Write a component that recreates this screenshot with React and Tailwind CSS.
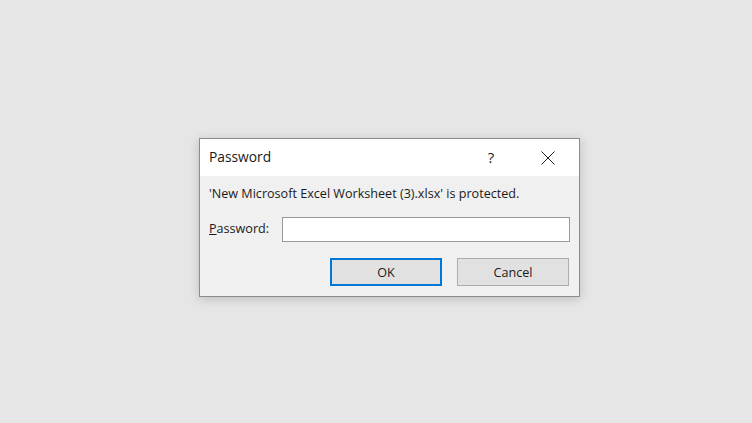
export default function App() {
  return (
    <div className="min-h-[423px] w-full bg-[#e6e6e6] pl-[199px] pt-[138px] font-['Open_Sans','Noto_Sans',sans-serif] text-[#000]">
      <div className="w-[381px] h-[159px] border border-[#8c8c8c] bg-[#f0f0f0] shadow-[0_2px_10px_rgba(0,0,0,0.18)] flex flex-col">
        <div className="h-[37px] bg-white flex items-center pl-[9px] shrink-0">
          <span className="text-[13.8px] text-[#1a1a1a] flex-1">Password</span>
          <span className="w-[40px] text-center text-[15px] text-[#222] mr-[17px]">?</span>
          <div className="w-[40px] flex items-center justify-center mr-[11px]">
            <svg width="14" height="14" viewBox="0 0 14 14" fill="none" stroke="#222" strokeWidth="1">
              <path d="M0.5 0.5 L13.5 13.5 M13.5 0.5 L0.5 13.5" />
            </svg>
          </div>
        </div>
        <div className="pl-[9px] pr-[9px] pt-[9px] flex flex-col">
          <p className="text-[12.6px] leading-[18px] text-[#1a1a1a]">'New Microsoft Excel Worksheet (3).xlsx' is protected.</p>
          <div className="flex items-center mt-[14px]">
            <span className="text-[12.6px] w-[73px] text-[#1a1a1a]"><span className="underline">P</span>assword:</span>
            <div className="w-[288px] h-[25px] border border-[#9a9a9a] bg-white" />
          </div>
          <div className="flex justify-end gap-[15px] mt-[16px] pr-[1px]">
            <button className="w-[112px] h-[28px] pt-[2px] border-2 border-[#0078d7] bg-[#e1e1e1] text-[12.6px] text-[#1a1a1a]">OK</button>
            <button className="w-[112px] h-[28px] pt-[2px] border border-[#adadad] bg-[#e1e1e1] text-[12.6px] text-[#1a1a1a]">Cancel</button>
          </div>
        </div>
      </div>
    </div>
  );
}
